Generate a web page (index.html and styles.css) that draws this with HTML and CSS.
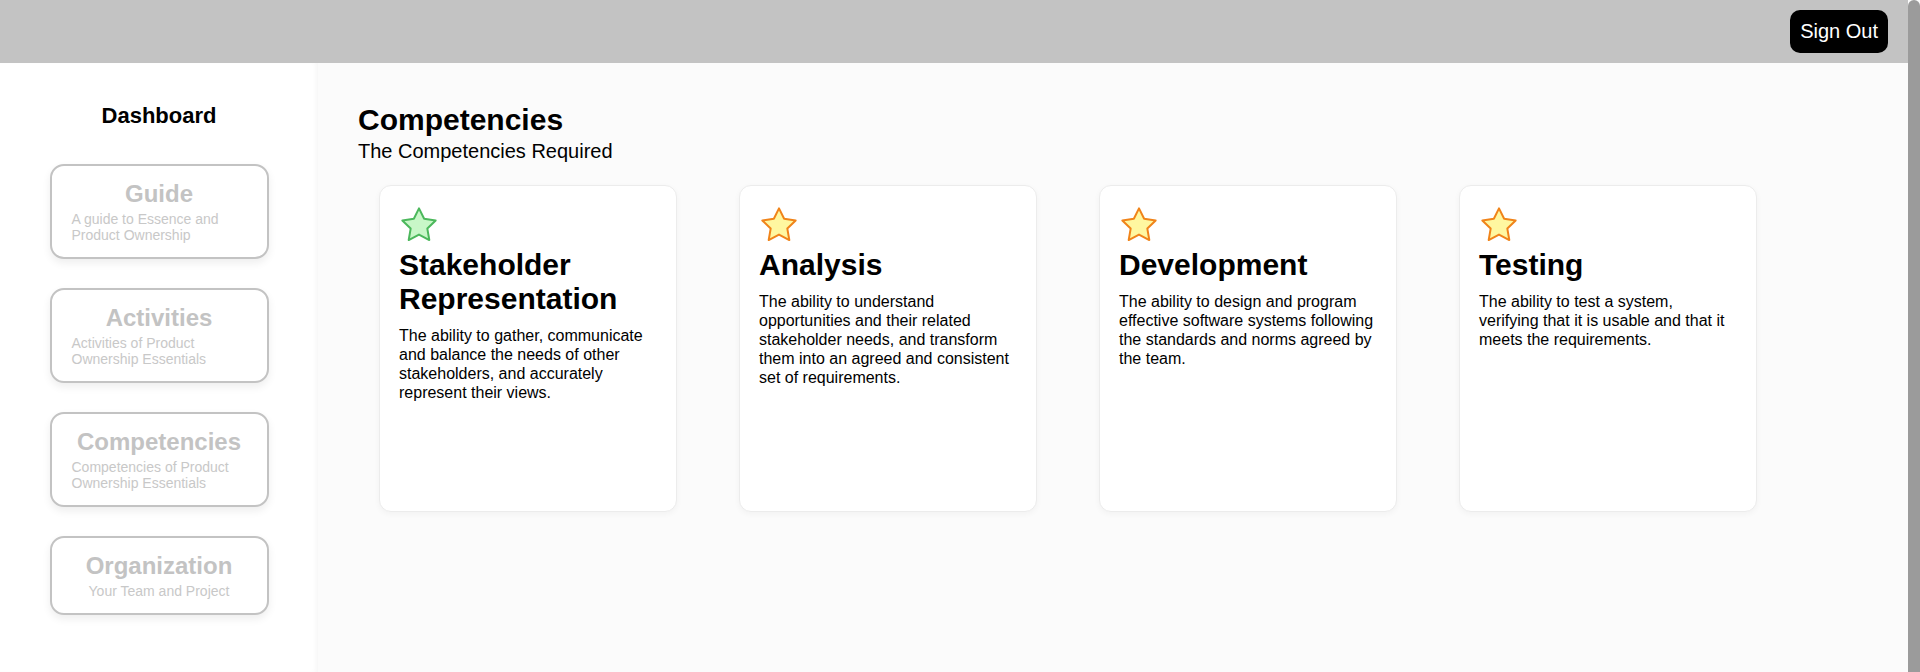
FILE: index.html
```html
<!DOCTYPE html>
<html lang="en">
<head>
<meta charset="utf-8">
<title>Competencies</title>
<link rel="stylesheet" href="styles.css">
</head>
<body>
<div class="app">
  <header class="topbar">
    <button class="signout">Sign Out</button>
  </header>
  <div class="layout">
    <aside class="sidebar">
      <div class="dash-title">Dashboard</div>
      <nav class="nav">
        <a class="nav-card">
          <div class="nav-title">Guide</div>
          <p class="nav-sub">A guide to Essence and Product Ownership</p>
        </a>
        <a class="nav-card">
          <div class="nav-title">Activities</div>
          <p class="nav-sub">Activities of Product Ownership Essentials</p>
        </a>
        <a class="nav-card">
          <div class="nav-title">Competencies</div>
          <p class="nav-sub">Competencies of Product Ownership Essentials</p>
        </a>
        <a class="nav-card">
          <div class="nav-title">Organization</div>
          <p class="nav-sub">Your Team and Project</p>
        </a>
      </nav>
    </aside>
    <main class="main">
      <h1 class="page-title">Competencies</h1>
      <p class="page-sub">The Competencies Required</p>
      <div class="cards">
        <div class="card">
          <svg class="star star-green" viewBox="0 0 24 24" width="40" height="40"><polygon points="12,2 15.09,8.26 22,9.27 17,14.14 18.18,21.02 12,17.77 5.82,21.02 7,14.14 2,9.27 8.91,8.26"/></svg>
          <h2 class="card-title">Stakeholder Representation</h2>
          <p class="card-text">The ability to gather, communicate and balance the needs of other stakeholders, and accurately represent their views.</p>
        </div>
        <div class="card">
          <svg class="star star-orange" viewBox="0 0 24 24" width="40" height="40"><polygon points="12,2 15.09,8.26 22,9.27 17,14.14 18.18,21.02 12,17.77 5.82,21.02 7,14.14 2,9.27 8.91,8.26"/></svg>
          <h2 class="card-title">Analysis</h2>
          <p class="card-text">The ability to understand opportunities and their related stakeholder needs, and transform them into an agreed and consistent set of requirements.</p>
        </div>
        <div class="card">
          <svg class="star star-orange" viewBox="0 0 24 24" width="40" height="40"><polygon points="12,2 15.09,8.26 22,9.27 17,14.14 18.18,21.02 12,17.77 5.82,21.02 7,14.14 2,9.27 8.91,8.26"/></svg>
          <h2 class="card-title">Development</h2>
          <p class="card-text">The ability to design and program effective software systems following the standards and norms agreed by the team.</p>
        </div>
        <div class="card">
          <svg class="star star-orange" viewBox="0 0 24 24" width="40" height="40"><polygon points="12,2 15.09,8.26 22,9.27 17,14.14 18.18,21.02 12,17.77 5.82,21.02 7,14.14 2,9.27 8.91,8.26"/></svg>
          <h2 class="card-title">Testing</h2>
          <p class="card-text">The ability to test a system, verifying that it is usable and that it meets the requirements.</p>
        </div>
      </div>
    </main>
  </div>
</div>
<div class="scrollbar"></div>
</body>
</html>
```
FILE: styles.css
```css
* { box-sizing: border-box; }
html, body { margin: 0; padding: 0; height: 100%; }
body {
  display: flex;
  height: 100vh;
  overflow: hidden;
  background: #fbfbfb;
  font-family: "Liberation Sans", Arial, sans-serif;
  color: #000;
}
.app {
  flex: 1;
  display: flex;
  flex-direction: column;
  min-width: 0;
}
.scrollbar {
  width: 12px;
  flex: none;
  background: #9b9b9b;
  border-radius: 6px 6px 0 0;
}
.topbar {
  height: 63px;
  flex: none;
  background: #c3c3c3;
  display: flex;
  align-items: center;
  justify-content: flex-end;
  padding-right: 20px;
}
.signout {
  font-family: "Liberation Sans", Arial, sans-serif;
  font-size: 20px;
  line-height: 23px;
  padding: 10px 10px;
  background: #000;
  color: #fff;
  border: none;
  border-radius: 10px;
  cursor: pointer;
}
.layout {
  flex: 1;
  display: flex;
  min-height: 0;
}
.sidebar {
  width: 318px;
  flex: none;
  background: #fff;
  padding-top: 40px;
  box-shadow: inset -4px 0 5px -2px rgba(0,0,0,0.04);
  display: flex;
  flex-direction: column;
  align-items: center;
}
.dash-title {
  font-size: 22px;
  font-weight: bold;
}
.nav {
  margin-top: 35px;
  display: flex;
  flex-direction: column;
  gap: 29px;
}
.nav-card {
  width: 219px;
  border: 2px solid #c3c3c3;
  border-radius: 14px;
  padding: 14px 20px;
  background: #fff;
  box-shadow: 0 4px 8px rgba(0,0,0,0.07);
  display: flex;
  flex-direction: column;
  align-items: center;
  color: #c3c3c3;
  text-decoration: none;
}
.nav-title {
  font-size: 24px;
  font-weight: bold;
  color: #c3c3c3;
}
.nav-sub {
  margin: 3px 0 0;
  font-size: 14px;
  color: #c8c8c8;
}
.main {
  flex: 1;
  background: #fbfbfb;
  padding: 40px;
}
.page-title {
  margin: 0;
  font-size: 30px;
  font-weight: bold;
}
.page-sub {
  margin: 3px 0 0;
  font-size: 20px;
}
.cards {
  margin-top: 22px;
  padding-left: 21px;
  display: flex;
  gap: 62px;
}
.card {
  width: 298px;
  height: 327px;
  flex: none;
  background: #fff;
  border: 1px solid #ececec;
  border-radius: 12px;
  box-shadow: 0 2px 6px rgba(0,0,0,0.04);
  padding: 19px 21px 19px 19px;
}
.star {
  display: block;
  margin-bottom: 3px;
  stroke-width: 1.2;
  stroke-linejoin: round;
}
.star-green { fill: #c8f7c8; stroke: #4cb85c; }
.star-orange { fill: #fff7a0; stroke: #f0841a; }
.card-title {
  margin: 0;
  font-size: 30px;
  font-weight: bold;
}
.card-text {
  margin: 10px 0 0;
  font-size: 16px;
  line-height: 19px;
}
```
